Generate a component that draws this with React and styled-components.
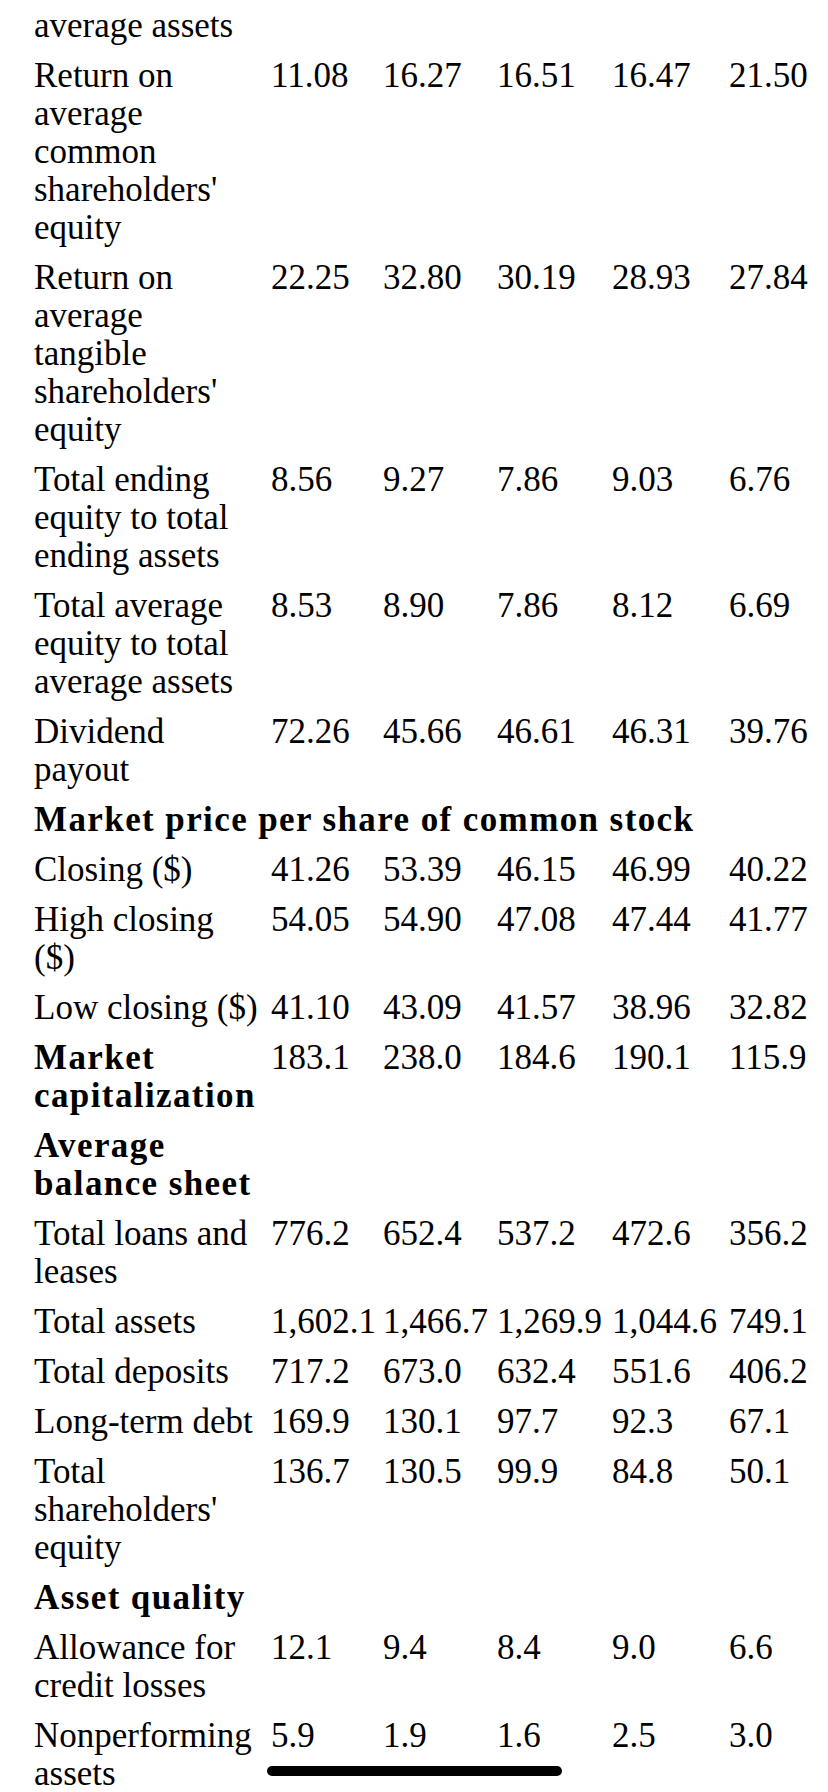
import React from "react";
import styled, { createGlobalStyle } from "styled-components";

const GlobalStyle = createGlobalStyle`
  html, body {
    margin: 0;
    padding: 0;
    background: #ffffff;
    overflow: hidden;
  }
  body {
    font-family: "Liberation Serif", "Times New Roman", serif;
    color: #000000;
    -webkit-font-smoothing: antialiased;
  }
`;

const Page = styled.div`
  width: 828px;
  height: 1792px;
  overflow: hidden;
  background: #ffffff;
`;

const Table = styled.table`
  margin-top: -37px;
  margin-left: 34px;
  width: 794px;
  table-layout: fixed;
  border-collapse: collapse;
  border-spacing: 0;
  font-size: 35px;
  line-height: 38px;
`;

const Cell = styled.td`
  padding: 6px 0;
  vertical-align: top;
  text-align: left;
  white-space: pre-line;
  font-weight: ${(p) => (p.$bold ? 700 : 400)};
  letter-spacing: ${(p) => (p.$bold ? "1.4px" : "0")};
`;

const Value = styled.td`
  padding: 6px 0;
  vertical-align: top;
  text-align: left;
  white-space: nowrap;
`;

const HomeIndicator = styled.div`
  position: fixed;
  left: 267px;
  top: 1766px;
  width: 295px;
  height: 10px;
  border-radius: 5px;
  background: #000000;
`;

const colWidths = [237, 112, 114, 115, 117, 99];

const rows = [
  { label: "Return on\naverage assets", values: ["0.94", "1.44", "1.30", "1.34", "1.44"] },
  {
    label: "Return on\naverage\ncommon\nshareholders'\nequity",
    values: ["11.08", "16.27", "16.51", "16.47", "21.50"],
  },
  {
    label: "Return on\naverage\ntangible\nshareholders'\nequity",
    values: ["22.25", "32.80", "30.19", "28.93", "27.84"],
  },
  { label: "Total ending\nequity to total\nending assets", values: ["8.56", "9.27", "7.86", "9.03", "6.76"] },
  { label: "Total average\nequity to total\naverage assets", values: ["8.53", "8.90", "7.86", "8.12", "6.69"] },
  { label: "Dividend\npayout", values: ["72.26", "45.66", "46.61", "46.31", "39.76"] },
  { label: "Market price per share of common stock", heading: true, span: true },
  { label: "Closing ($)", values: ["41.26", "53.39", "46.15", "46.99", "40.22"] },
  { label: "High closing\n($)", values: ["54.05", "54.90", "47.08", "47.44", "41.77"] },
  { label: "Low closing ($)", values: ["41.10", "43.09", "41.57", "38.96", "32.82"] },
  { label: "Market\ncapitalization", heading: true, values: ["183.1", "238.0", "184.6", "190.1", "115.9"] },
  { label: "Average\nbalance sheet", heading: true, values: [] },
  { label: "Total loans and\nleases", values: ["776.2", "652.4", "537.2", "472.6", "356.2"] },
  { label: "Total assets", values: ["1,602.1", "1,466.7", "1,269.9", "1,044.6", "749.1"] },
  { label: "Total deposits", values: ["717.2", "673.0", "632.4", "551.6", "406.2"] },
  { label: "Long-term debt", values: ["169.9", "130.1", "97.7", "92.3", "67.1"] },
  { label: "Total\nshareholders'\nequity", values: ["136.7", "130.5", "99.9", "84.8", "50.1"] },
  { label: "Asset quality", heading: true, values: [] },
  { label: "Allowance for\ncredit losses", values: ["12.1", "9.4", "8.4", "9.0", "6.6"] },
  { label: "Nonperforming\nassets", values: ["5.9", "1.9", "1.6", "2.5", "3.0"] },
];

const App = () => {
  return (
    <Page>
      <GlobalStyle />
      <Table>
        <colgroup>
          {colWidths.map((w, i) => (
            <col key={i} style={{ width: w }} />
          ))}
        </colgroup>
        <tbody>
          {rows.map((row, i) =>
            row.span ? (
              <tr key={i}>
                <Cell $bold colSpan={6}>
                  {row.label}
                </Cell>
              </tr>
            ) : (
              <tr key={i}>
                <Cell $bold={row.heading}>{row.label}</Cell>
                {[0, 1, 2, 3, 4].map((j) => (
                  <Value key={j}>{row.values[j] || ""}</Value>
                ))}
                <Value />
              </tr>
            )
          )}
        </tbody>
      </Table>
      <HomeIndicator />
    </Page>
  );
};

export default App;
